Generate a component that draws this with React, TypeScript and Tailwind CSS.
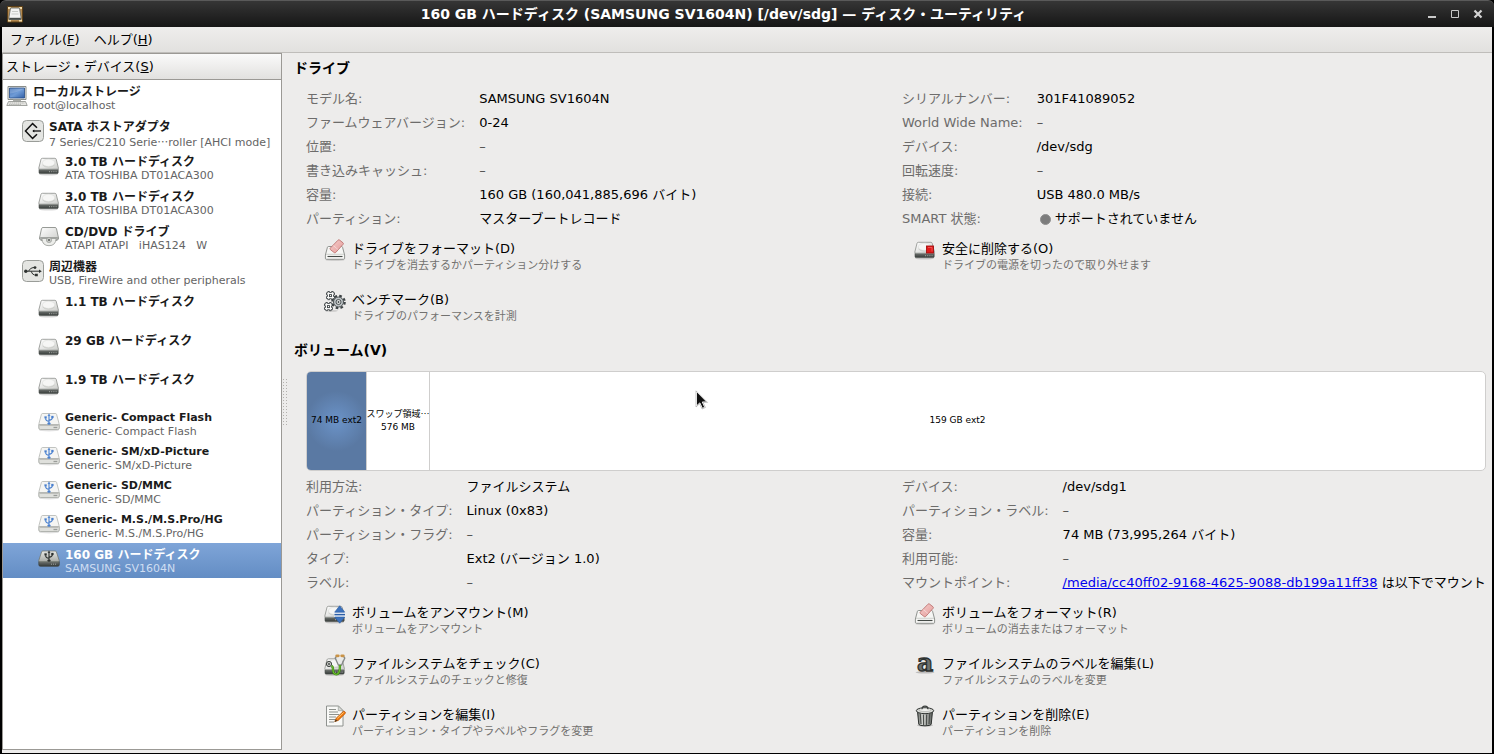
import type { ReactNode } from "react";

/* ---------- Icons ---------- */

function Svg({ children, size = 22 }: { children: ReactNode; size?: number }) {
  return (
    <svg
      width={size}
      height={size}
      viewBox={`0 0 ${size} ${size}`}
      className="shrink-0 overflow-visible"
      aria-hidden="true"
    >
      {children}
    </svg>
  );
}

function Gradients() {
  return (
    <svg width="0" height="0" className="absolute" aria-hidden="true">
      <defs>
        <linearGradient id="plate" x1="0" y1="0" x2="1" y2="1">
          <stop offset="0" stopColor="#ffffff" />
          <stop offset="1" stopColor="#cdcecb" />
        </linearGradient>
        <linearGradient id="plateDark" x1="0" y1="0" x2="0" y2="1">
          <stop offset="0" stopColor="#e8e9e6" />
          <stop offset="1" stopColor="#a9aba6" />
        </linearGradient>
        <linearGradient id="front" x1="0" y1="0" x2="0" y2="1">
          <stop offset="0" stopColor="#6f7370" />
          <stop offset="1" stopColor="#353a38" />
        </linearGradient>
        <linearGradient id="screen" x1="0" y1="0" x2="1" y2="1">
          <stop offset="0" stopColor="#3f70b8" />
          <stop offset="0.5" stopColor="#6f9bd6" />
          <stop offset="1" stopColor="#2f5ea6" />
        </linearGradient>
        <linearGradient id="can" x1="0" y1="0" x2="1" y2="0">
          <stop offset="0" stopColor="#6c706c" />
          <stop offset="0.35" stopColor="#d7d9d5" />
          <stop offset="1" stopColor="#5a5e5b" />
        </linearGradient>
        <linearGradient id="rubber" x1="0" y1="0" x2="1" y2="1">
          <stop offset="0" stopColor="#f6cfcd" />
          <stop offset="1" stopColor="#e49a98" />
        </linearGradient>
      </defs>
    </svg>
  );
}

function DriveShape() {
  return (
    <>
      <ellipse cx="10.5" cy="19.2" rx="9.5" ry="1.4" fill="#000" opacity="0.14" />
      <path d="M1 14.200h19.200v3.200q0 1.200-1.200 1.200H2.200Q1 18.600 1 17.400z" fill="url(#front)" stroke="#4a4f4c" strokeWidth="0.6" />
      <path d="M4.300 3.300h12.600q1 0 1.300 1l2.200 8.700q.2 1.200-1 1.200H1.800q-1.200 0-1-1.200L3 4.300q.3-1 1.300-1z" fill="url(#plate)" stroke="#8b8e8a" strokeWidth="0.8" />
      <ellipse cx="10.600" cy="7.800" rx="6.200" ry="3.600" fill="#f6f6f5" stroke="#dcddda" strokeWidth="0.6" />
      <path d="M4.400 9.800q2 2.400 6.200 2.400t6.200-2.400" fill="none" stroke="#c4c6c2" strokeWidth="0.7" />
      <path d="M11 16.700h1M13.200 16.700h1M15.400 16.700h1M17.600 16.700h1" stroke="#a2a5a2" strokeWidth="1" />
    </>
  );
}

function DriveIcon() {
  return (
    <Svg>
      <DriveShape />
    </Svg>
  );
}

function Trident({ color }: { color: string }) {
  return (
    <g stroke={color} fill={color}>
      <path d="M11 4v8.500M11 10.200Q7.600 9.800 7.600 7.200M11 9.400q3.400-.4 3.400-2.800" fill="none" strokeWidth="1.100" />
      <path d="M11 2.800l1.200 1.900H9.800z" strokeWidth="0.300" />
      <path d="M6.600 5.400h2v1.900h-2zM13.400 5h2v1.900h-2z" strokeWidth="0.300" />
      <ellipse cx="11" cy="12.600" rx="1.700" ry="1.200" stroke="none" />
    </g>
  );
}

function UsbDriveIcon() {
  return (
    <Svg>
      <ellipse cx="11" cy="19.200" rx="10" ry="1.300" fill="#000" opacity="0.1" />
      <path d="M.8 13.500h20.500v3.500q0 1.600-1.600 1.600H2.400Q.8 18.600.8 17z" fill="#dfe0dc" stroke="#9c9f9b" strokeWidth="0.800" />
      <path d="M4.600 2.500h12.800q1 0 1.200.9L21 12.300q.3 1.600-1.200 1.600H2.200q-1.500 0-1.200-1.600l2.400-8.900q.2-.9 1.200-.9z" fill="#f5f5f3" stroke="#b3b5b1" strokeWidth="0.800" />
      <path d="M1.600 13.900h18.800" stroke="#a9aba7" strokeWidth="1.200" />
      <path d="M15.500 16.500h3.800" stroke="#9a9d99" strokeWidth="1.300" />
      <Trident color="#4a80cf" />
    </Svg>
  );
}

function UsbDriveSelectedIcon() {
  return (
    <Svg>
      <path d="M.8 13.500h20.500v3.200q0 1.600-1.600 1.600H2.400Q.8 18.300.8 16.700z" fill="url(#front)" stroke="#3f4442" strokeWidth="0.700" />
      <path d="M4.800 3h12.400q.9 0 1.200.9l2.800 8.500q.3 1.300-1.200 1.300H2q-1.500 0-1.200-1.300l2.800-8.500q.3-.9 1.200-.9z" fill="url(#plateDark)" stroke="#74776f" strokeWidth="0.800" />
      <path d="M13 16.200h6" stroke="#9fa3a0" strokeWidth="1" strokeDasharray="1 1" />
      <Trident color="#2c302e" />
    </Svg>
  );
}

function OpticalIcon() {
  return (
    <Svg>
      <path d="M5 2.500h12q1.200 0 1.500 1.200l2 9.300q.3 1.500-1.200 2l-2.300.6H5l-2.300-.6Q1.200 14.500 1.500 13l2-9.300Q3.800 2.500 5 2.500z" fill="url(#plate)" stroke="#8b8e8a" strokeWidth="0.900" />
      <path d="M2.500 12.500h17l-.5 2.700H3z" fill="#b9bbb7" stroke="#858884" strokeWidth="0.600" />
      <path d="M3.800 13.500h14.400q-.5 7.200-7.200 7.200t-7.200-7.200z" fill="#ecedea" stroke="#959894" strokeWidth="0.800" />
      <circle cx="11" cy="15" r="2.600" fill="#c9cbc7" stroke="#8f928e" strokeWidth="0.600" />
      <circle cx="11" cy="15" r="1" fill="#5d615e" />
    </Svg>
  );
}

function ComputerIcon() {
  return (
    <Svg>
      <path d="M2 1.500h18v13H2z" fill="#f0f0ee" stroke="#7e817d" strokeWidth="0.900" />
      <path d="M3.500 3h15v10h-15z" fill="url(#screen)" stroke="#274b84" strokeWidth="0.800" />
      <path d="M4 8.500Q10 8 18 3.400V3.500H4z" fill="#fff" opacity="0.180" />
      <path d="M7 14.500h8v2H7z" fill="#a9aba7" />
      <path d="M2.500 16.500h17l1.700 4H.8z" fill="#e6e6e3" stroke="#8b8e8a" strokeWidth="0.800" />
      <path d="M3.500 18h15M3 19.500h12" stroke="#a9aba7" strokeWidth="0.800" strokeDasharray="1.500 .6" />
    </Svg>
  );
}

function SataIcon() {
  return (
    <Svg>
      <rect x="0.500" y="0.500" width="21" height="21" rx="4" fill="#e4e5e2" stroke="#9a9d99" />
      <path d="M15 7.700L10.600 3.600 3.500 11l7.100 7.400 4.400-4.100" fill="none" stroke="#111" strokeWidth="1.500" />
      <path d="M11 11h8" fill="none" stroke="#111" strokeWidth="1.300" />
      <path d="M10.300 11l2-1.500v3z" fill="#111" />
    </Svg>
  );
}

function UsbIcon() {
  return (
    <Svg>
      <rect x="0.500" y="0.500" width="21" height="21" rx="4" fill="#e4e5e2" stroke="#9a9d99" />
      <g stroke="#2e3230" fill="none" strokeWidth="1">
        <path d="M3.500 11.200h14M6.500 11.200Q8.500 7.600 11 7.600h1.500M9 11.200q1.600 3.800 3.600 3.800h1.500" />
      </g>
      <circle cx="3.800" cy="11.200" r="1.700" fill="#2e3230" />
      <circle cx="13" cy="7.600" r="1.400" fill="#2e3230" />
      <path d="M13 13.700h2.800v2.600H13zM17 9.400l2.800 1.800-2.800 1.800z" fill="#2e3230" />
    </Svg>
  );
}

function EraseIcon() {
  return (
    <Svg>
      <ellipse cx="11" cy="21" rx="9.500" ry="1.100" fill="#000" opacity="0.120" />
      <path d="M4.500 7.500h13q.9 0 1.100.9l2 7.600v3.300q0 1-1 1H2.400q-1 0-1-1V16l2-7.600q.2-.9 1.100-.9z" fill="#f6f6f4" stroke="#858884" strokeWidth="0.900" />
      <path d="M3.500 17.500h15" stroke="#454a47" strokeWidth="1.100" />
      <path d="M2 15.300h18" stroke="#c5c7c3" strokeWidth="0.800" />
      <path d="M14 1.200q.7-.8 1.600-.1l3.400 2.700q.8.700.1 1.500l-7.400 8.200q-.7.700-1.500.1l-3.800-3q-.8-.7-.1-1.500z" fill="url(#rubber)" stroke="#bd7472" strokeWidth="0.900" />
      <path d="M9.300 6.500l5 4.300" stroke="#fff" strokeWidth="0.700" opacity="0.600" />
    </Svg>
  );
}

function EjectSafeIcon() {
  return (
    <Svg>
      <DriveShape />
      <rect x="12.500" y="7" width="7" height="7" fill="#e01b1b" stroke="#a30f0f" strokeWidth="0.900" />
      <path d="M14 8.500h4v4" fill="none" stroke="#f26a6a" strokeWidth="0.700" />
    </Svg>
  );
}

function GearsIcon() {
  return (
    <Svg>
      <ellipse cx="8" cy="20.800" rx="6" ry="0.900" fill="#000" opacity="0.150" />
      <g stroke="#3d4345">
        <path d="M3.800 1.500h1.700v1h2v-1h1.700v1.300h1.300v2h-1v1.700h1v2H9.200v1.200H7.500v-1h-2v1H3.800V8.500H2.500v-2h1V4.800h-1v-2h1.300z" fill="#f8f8f7" strokeWidth="0.900" />
        <rect x="5.500" y="4.600" width="2" height="2" strokeWidth="0.900" fill="#fff" />
        <path d="M1.800 12.500h1.700v1h2v-1h1.700v1.300h1.300v2h-1v1.700h1v2H7.200v1.200H5.500v-1h-2v1H1.800v-1.200H.5v-2h1v-1.700h-1v-2h1.300z" fill="#f8f8f7" strokeWidth="0.900" />
        <rect x="3.500" y="15.600" width="2" height="2" strokeWidth="0.900" fill="#fff" />
        <circle cx="14.500" cy="12" r="6.200" strokeWidth="2.200" strokeDasharray="2.600 2.270" fill="none" />
        <circle cx="14.500" cy="12" r="5" strokeWidth="0.900" fill="#bcc2c4" />
        <circle cx="14.500" cy="12" r="2.500" strokeWidth="0.900" fill="#e6e8e7" />
        <circle cx="14.500" cy="12" r="0.600" fill="#3d4345" />
      </g>
    </Svg>
  );
}

function UnmountIcon() {
  return (
    <Svg>
      <DriveShape />
      <path d="M10.200 9h11v5h-11z" fill="#fff" />
      <path d="M15.700 2.800l5 6.400H10.700zM15.700 20.200l5-6.200H10.700z" fill="#3c72bd" stroke="#2c5ea6" strokeWidth="0.700" />
      <path d="M10.400 11.600h10.600" stroke="#2c5ea6" strokeWidth="1.600" />
    </Svg>
  );
}

function CheckFsIcon() {
  return (
    <Svg>
      <g transform="translate(0 1.500)">
        <DriveShape />
      </g>
      <circle cx="5" cy="10" r="2.600" fill="#c9cbc7" stroke="#3c403e" strokeWidth="1" />
      <circle cx="5" cy="10" r="0.900" fill="#3c403e" />
      <path d="M12 4l2.800 6.300h2L20 4z" fill="#e9eae8" />
      <path d="M12.400 2.500l-1.200 1.500 3.200 7h3.200l3.200-7-1.200-1.500" fill="none" stroke="#858987" strokeWidth="1.300" />
      <path d="M12.700 1.800h1.600M17.700 1.800h1.600" stroke="#c99347" strokeWidth="2.800" strokeLinecap="round" />
      <path d="M7.500 11.800q1.600.6 1.500 4 .2 4.600 3.300 4.600 3.700 0 3.700-9.400" fill="none" stroke="#3d8b12" strokeWidth="2.300" />
      <path d="M7.500 11.800q1.600.6 1.500 4 .2 4.600 3.300 4.600 3.700 0 3.700-9.400" fill="none" stroke="#7cc93b" strokeWidth="0.900" />
    </Svg>
  );
}

function EditIcon() {
  return (
    <Svg>
      <path d="M2.500 1h12l4.500 4.500V21h-16.500z" fill="#f9f9f7" stroke="#858884" strokeWidth="0.900" />
      <path d="M14.300 1v4.700H19z" fill="#d8d9d6" stroke="#9a9d99" strokeWidth="0.700" />
      <path d="M5 4.500h7M5 7h9M5 9.500h10M5 12h7M5 14.500h6M5 17h5" stroke="#8e918d" strokeWidth="1" />
      <path d="M10.800 16.600l1.400-3.400 7-6.700q.7-.6 1.400 0l.6.700q.6.700 0 1.300l-7 6.900z" fill="#f57d10" stroke="#b04f04" strokeWidth="0.800" />
      <path d="M13.300 13.400l6.400-6" stroke="#fcc06b" strokeWidth="1" />
      <path d="M10.600 16.900l1.100-2.600 1.600 1.400z" fill="#4b3b28" />
    </Svg>
  );
}

function LabelIcon() {
  return (
    <Svg>
      <ellipse cx="11" cy="18.300" rx="9.500" ry="1.300" fill="#000" opacity="0.200" />
      <text
        x="11"
        y="17"
        textAnchor="middle"
        fontFamily="'DejaVu Serif', serif"
        fontWeight="700"
        fontSize="25"
        fill="#6d7170"
        stroke="#2c302f"
        strokeWidth="1.300"
      >
        a
      </text>
    </Svg>
  );
}

function TrashIcon() {
  return (
    <Svg>
      <ellipse cx="11" cy="20.300" rx="8" ry="1.500" fill="#000" opacity="0.200" />
      <path d="M3.500 6.500h15l-1.300 12.800q-.2 1.500-6.200 1.500t-6.200-1.500z" fill="url(#can)" stroke="#2e3230" strokeWidth="1" />
      <path d="M6.300 9l.7 10M9.400 9.500l.2 10.400M12.600 9.500l-.2 10.400M15.700 9l-.7 10" stroke="#4a4e4b" strokeWidth="1.100" />
      <ellipse cx="11" cy="5.700" rx="8.700" ry="3" fill="#d6d8d4" stroke="#2e3230" strokeWidth="1" />
      <ellipse cx="11" cy="4.900" rx="6" ry="1.600" fill="#f1f2ef" stroke="#9a9d99" strokeWidth="0.500" />
      <path d="M8 4.300Q8 1.200 11 1.200t3 3.100" fill="none" stroke="#3a3e3c" strokeWidth="1.300" />
    </Svg>
  );
}

function AppIcon() {
  return (
    <Svg size={16}>
      <path d="M.5 0.500h15v15.500H.5z" fill="#b48a52" stroke="#5e4017" strokeWidth="1" />
      <path d="M1 1h3v2H1zM12 1h3v2h-3zM1 13.500h3v2H1zM12 13.500h3v2h-3z" fill="#f0d9a8" />
      <path d="M3.500 2h9l1.500 9v2.500H2V11z" fill="#f3f3f2" stroke="#6c6f6b" strokeWidth="0.900" />
      <path d="M2.300 11.800h11.500v1.800H2.300z" fill="#474b49" />
      <path d="M5 5.500h6M4.500 8h7" stroke="#c9cbc7" strokeWidth="1" />
    </Svg>
  );
}

/* ---------- Data ---------- */

type Device = {
  title: string;
  sub?: ReactNode;
  icon: ReactNode;
  indent: string;
  box: string;
  selected?: boolean;
};

const L0 = "pl-[3px]";
const L1 = "pl-[19px]";
const L2 = "pl-[35px]";
const NORMAL = "h-[35px] pt-[5px] [--title:12px]";
const TALL = "h-[39px] pt-[5px] [--title:12px]";
const SHORT = "h-[34px] pt-1 [--title:11px]";

const ellipsis = <span className="font-['Noto_Sans_CJK_JP',sans-serif]">…</span>;

const devices: Device[] = [
  { title: "ローカルストレージ", sub: "root@localhost", icon: <ComputerIcon />, indent: L0, box: NORMAL },
  { title: "SATA ホストアダプタ", sub: <>7 Series/C210 Serie{ellipsis}roller [AHCI mode]</>, icon: <SataIcon />, indent: L1, box: NORMAL },
  { title: "3.0 TB ハードディスク", sub: "ATA TOSHIBA DT01ACA300", icon: <DriveIcon />, indent: L2, box: NORMAL },
  { title: "3.0 TB ハードディスク", sub: "ATA TOSHIBA DT01ACA300", icon: <DriveIcon />, indent: L2, box: NORMAL },
  { title: "CD/DVD ドライブ", sub: "ATAPI ATAPI   iHAS124   W", icon: <OpticalIcon />, indent: L2, box: NORMAL },
  { title: "周辺機器", sub: "USB, FireWire and other peripherals", icon: <UsbIcon />, indent: L1, box: NORMAL },
  { title: "1.1 TB ハードディスク", icon: <DriveIcon />, indent: L2, box: TALL },
  { title: "29 GB ハードディスク", icon: <DriveIcon />, indent: L2, box: TALL },
  { title: "1.9 TB ハードディスク", icon: <DriveIcon />, indent: L2, box: TALL },
  { title: "Generic- Compact Flash", sub: "Generic- Compact Flash", icon: <UsbDriveIcon />, indent: L2, box: SHORT },
  { title: "Generic- SM/xD-Picture", sub: "Generic- SM/xD-Picture", icon: <UsbDriveIcon />, indent: L2, box: SHORT },
  { title: "Generic- SD/MMC", sub: "Generic- SD/MMC", icon: <UsbDriveIcon />, indent: L2, box: SHORT },
  { title: "Generic- M.S./M.S.Pro/HG", sub: "Generic- M.S./M.S.Pro/HG", icon: <UsbDriveIcon />, indent: L2, box: SHORT },
  { title: "160 GB ハードディスク", sub: "SAMSUNG SV1604N", icon: <UsbDriveSelectedIcon />, indent: L2, box: NORMAL, selected: true },
];

type Field = [string, ReactNode];

const driveLeft: Field[] = [
  ["モデル名:", "SAMSUNG SV1604N"],
  ["ファームウェアバージョン:", "0-24"],
  ["位置:", "–"],
  ["書き込みキャッシュ:", "–"],
  ["容量:", "160 GB (160,041,885,696 バイト)"],
  ["パーティション:", "マスターブートレコード"],
];

const driveRight: Field[] = [
  ["シリアルナンバー:", "301F41089052"],
  ["World Wide Name:", "–"],
  ["デバイス:", "/dev/sdg"],
  ["回転速度:", "–"],
  ["接続:", "USB 480.0 MB/s"],
  [
    "SMART 状態:",
    <span className="flex items-center gap-1 pl-[3px]">
      <span className="size-[11px] rounded-full border border-[#8f8f8f] bg-[#7c7c7c]" />
      サポートされていません
    </span>,
  ],
];

const volumeLeft: Field[] = [
  ["利用方法:", "ファイルシステム"],
  ["パーティション・タイプ:", "Linux (0x83)"],
  ["パーティション・フラグ:", "–"],
  ["タイプ:", "Ext2 (バージョン 1.0)"],
  ["ラベル:", "–"],
];

const volumeRight: Field[] = [
  ["デバイス:", "/dev/sdg1"],
  ["パーティション・ラベル:", "–"],
  ["容量:", "74 MB (73,995,264 バイト)"],
  ["利用可能:", "–"],
  [
    "マウントポイント:",
    <>
      <a href="#mount" className="text-[#0000ee] underline">
        /media/cc40ff02-9168-4625-9088-db199a11ff38
      </a>{" "}
      は以下でマウント
    </>,
  ],
];

/* ---------- Parts ---------- */

function Fields({ items }: { items: Field[] }) {
  return (
    <dl className="grid min-w-0 grid-cols-[auto_1fr] content-start gap-x-3.5 leading-6 whitespace-nowrap">
      {items.map(([label, value]) => (
        <div key={label} className="contents">
          <dt className="text-[#6d6c6b]">{label}</dt>
          <dd className={value === "–" ? "text-[#4c4c4c]" : "text-black"}>{value}</dd>
        </div>
      ))}
    </dl>
  );
}

function Action({ icon, title, sub }: { icon: ReactNode; title: string; sub: string }) {
  return (
    <button type="button" className="flex items-start gap-1.5 text-left whitespace-nowrap">
      {icon}
      <span className="pt-px">
        <span className="block leading-[18px] text-black">{title}</span>
        <span className="block text-[11px] leading-4 text-[#72716f]">{sub}</span>
      </span>
    </button>
  );
}

function DeviceRow({ device }: { device: Device }) {
  const { title, sub, icon, indent, box, selected } = device;
  return (
    <li>
      <button
        type="button"
        aria-current={selected ? "true" : undefined}
        className={`flex w-full items-start gap-[5px] text-left text-[11px] leading-[14px] whitespace-pre ${indent} ${box} ${
          selected ? "bg-linear-to-b from-[#7fa5d8] to-[#638dc4]" : ""
        }`}
      >
        <span className={sub ? "" : "pt-0.5"}>{icon}</span>
        <span>
          <span className={`block text-[length:var(--title)] font-bold ${selected ? "text-white" : "text-[#1a1a1a]"}`}>
            {title}
          </span>
          {sub && <span className={`block ${selected ? "text-[#cfdef2]" : "text-[#646464]"}`}>{sub}</span>}
        </span>
      </button>
    </li>
  );
}

export default function App() {
  return (
    <div
      lang="ja"
      className="flex min-h-screen flex-col bg-black font-['DejaVu_Sans','Noto_Sans_CJK_JP',sans-serif] text-[13px]"
    >
      <Gradients />
      <header className="flex h-[27px] items-center rounded-t-md border-t border-[#5a5a5a] bg-linear-to-b from-[#363636] to-[#161616] px-[7px]">
        <AppIcon />
        <h1 className="flex-1 text-center text-sm font-bold whitespace-nowrap text-white">
          160 GB ハードディスク (SAMSUNG SV1604N) [/dev/sdg] — ディスク・ユーティリティ
        </h1>
        <div className="flex gap-[7px] pr-px">
          <button type="button" aria-label="最小化">
            <Svg size={16}>
              <path d="M4 10h8v2H4z" fill="#c9c9c9" />
            </Svg>
          </button>
          <button type="button" aria-label="最大化">
            <Svg size={16}>
              <path d="M4.500 4.500h7v7h-7z" fill="none" stroke="#c9c9c9" />
            </Svg>
          </button>
          <button type="button" aria-label="閉じる">
            <Svg size={16}>
              <path d="M4.500 4.500l7 7M11.500 4.500l-7 7" stroke="#d4d4d4" strokeWidth="2.200" />
            </Svg>
          </button>
        </div>
      </header>

      <div className="mx-0.5 mb-px flex flex-1 flex-col bg-[#edeceb]">
        <nav className="flex h-[26px] items-center border-b border-[#bfbdba] bg-linear-to-b from-[#eeedec] to-[#e2e1df] px-px pt-px">
          <button type="button" className="px-[7px]">
            ファイル(<u>F</u>)
          </button>
          <button type="button" className="px-[7px]">
            ヘルプ(<u>H</u>)
          </button>
        </nav>

        <div className="flex flex-1">
          <aside className="mb-[3px] flex w-[280px] shrink-0 flex-col border border-t-0 border-[#9b9995] bg-white">
            <h2 className="flex h-[27px] items-center border-t border-b border-[#9b9995] bg-linear-to-b from-[#fafafa] to-[#e2e1df] px-[3px] pt-px">
              <span>
                ストレージ・デバイス(<u>S</u>)
              </span>
            </h2>
            <ul>
              {devices.map((device, index) => (
                <DeviceRow key={index} device={device} />
              ))}
            </ul>
          </aside>

          <div className="mr-1.5 mt-[325px] h-[47px] w-1.5 shrink-0 bg-[radial-gradient(#b3b1ae_1px,transparent_1px)] bg-size-[3px_3px]" />

          <main className="min-w-0 flex-1 pr-1.5 pt-[5px]">
            <section>
              <h2 className="text-sm leading-5 font-bold">ドライブ</h2>
              <div className="pl-3">
                <div className="mt-[9px] grid grid-cols-2 gap-x-3">
                  <Fields items={driveLeft} />
                  <Fields items={driveRight} />
                </div>
                <div className="mt-2 -mr-[18px] grid grid-cols-2 gap-y-4 pl-[18px]">
                  <Action icon={<EraseIcon />} title="ドライブをフォーマット(D)" sub="ドライブを消去するかパーティション分けする" />
                  <Action icon={<EjectSafeIcon />} title="安全に削除する(O)" sub="ドライブの電源を切ったので取り外せます" />
                  <Action icon={<GearsIcon />} title="ベンチマーク(B)" sub="ドライブのパフォーマンスを計測" />
                </div>
              </div>
            </section>

            <section className="mt-[15px]">
              <h2 className="text-sm leading-5 font-bold">ボリューム(V)</h2>
              <div className="pl-3">
                <div className="relative mt-[11px] flex h-[100px] overflow-hidden rounded-[5px] border border-[#cfcecd] bg-white text-[9px] leading-[13px] whitespace-nowrap">
                  <button
                    type="button"
                    className="w-[59px] shrink-0 bg-[radial-gradient(circle_at_center,#6b93c8_0px,#5a79a3_30px)] pb-0.5"
                  >
                    74 MB ext2
                  </button>
                  <button type="button" className="w-16 shrink-0 border-x border-[#cfcecd] pb-0.5">
                    <span className="-mx-1 block">スワップ領域{ellipsis}</span>
                    <span className="block">576 MB</span>
                  </button>
                  <button type="button" className="flex-1 pb-0.5">
                    159 GB ext2
                  </button>
                  <svg width="14" height="20" viewBox="0 0 14 20" className="absolute left-[388px] top-[18px]" aria-hidden="true">
                    <path d="M1.500 1.500v14.500l3.300-3.100 2.600 5.500 2.400-1.100-2.500-5.300h4.500z" fill="#111" stroke="#fff" strokeWidth="1" />
                    <path d="M1 .8v16.200l3.600-3.300 2.500 5.300 3.300-1.500-2.400-5.100h4.500z" fill="none" stroke="#8a8a8a" strokeWidth="0.500" />
                  </svg>
                </div>
                <div className="mt-1 grid grid-cols-2 gap-x-3">
                  <Fields items={volumeLeft} />
                  <Fields items={volumeRight} />
                </div>
                <div className="mt-2 -mr-[18px] grid grid-cols-2 gap-y-4 pl-[18px]">
                  <Action icon={<UnmountIcon />} title="ボリュームをアンマウント(M)" sub="ボリュームをアンマウント" />
                  <Action icon={<EraseIcon />} title="ボリュームをフォーマット(R)" sub="ボリュームの消去またはフォーマット" />
                  <Action icon={<CheckFsIcon />} title="ファイルシステムをチェック(C)" sub="ファイルシステムのチェックと修復" />
                  <Action icon={<LabelIcon />} title="ファイルシステムのラベルを編集(L)" sub="ファイルシステムのラベルを変更" />
                  <Action icon={<EditIcon />} title="パーティションを編集(I)" sub="パーティション・タイプやラベルやフラグを変更" />
                  <Action icon={<TrashIcon />} title="パーティションを削除(E)" sub="パーティションを削除" />
                </div>
              </div>
            </section>
          </main>
        </div>
      </div>
    </div>
  );
}
